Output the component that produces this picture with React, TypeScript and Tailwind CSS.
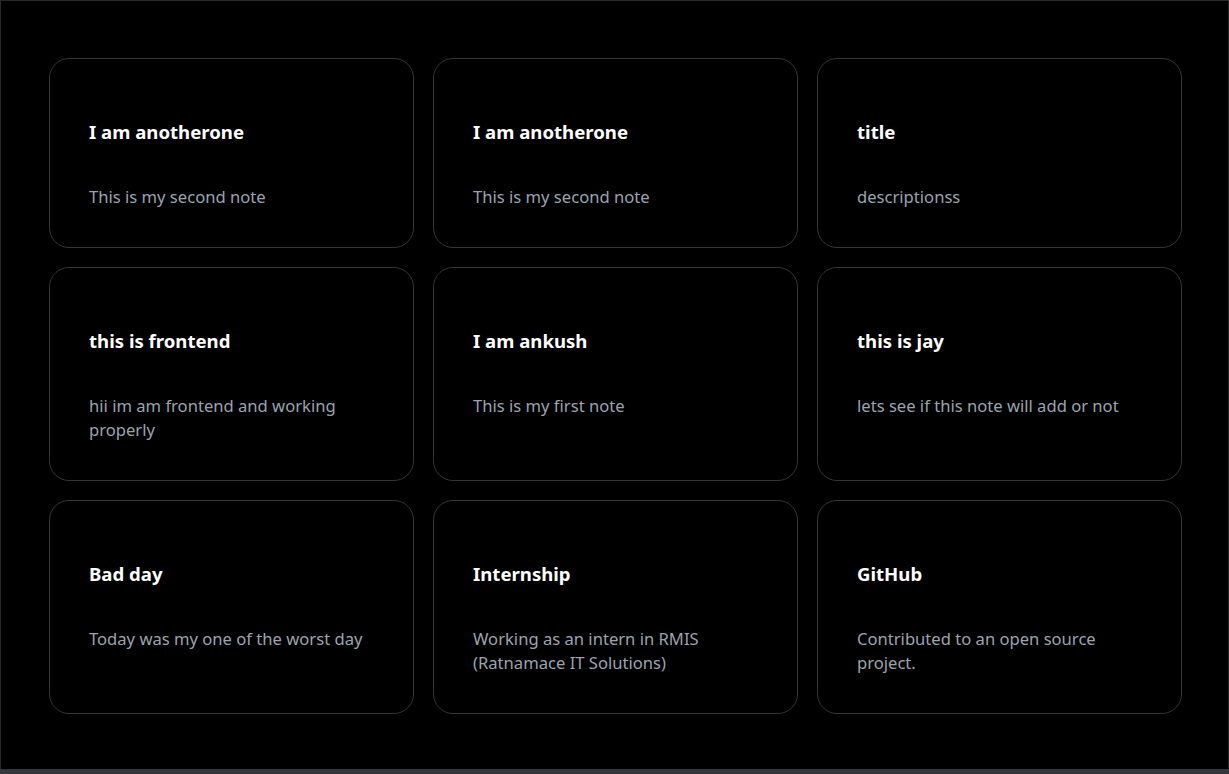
import React from 'react';

interface Note {
  id: number;
  title: string;
  description: string;
}

const notes: Note[] = [
  { id: 1, title: 'I am anotherone', description: 'This is my second note' },
  { id: 2, title: 'I am anotherone', description: 'This is my second note' },
  { id: 3, title: 'title', description: 'descriptionss' },
  { id: 4, title: 'this is frontend', description: 'hii im am frontend and working properly' },
  { id: 5, title: 'I am ankush', description: 'This is my first note' },
  { id: 6, title: 'this is jay', description: 'lets see if this note will add or not' },
  { id: 7, title: 'Bad day', description: 'Today was my one of the worst day' },
  { id: 8, title: 'Internship', description: 'Working as an intern in RMIS (Ratnamace IT Solutions)' },
  { id: 9, title: 'GitHub', description: 'Contributed to an open source project.' },
];

function NoteCard({ note }: { note: Note }) {
  return (
    <div className="rounded-[20px] border border-[#353535] bg-black px-[39px] pt-[59px] pb-[38px]">
      <h2 className="text-[18.6px] font-bold leading-7 text-white">{note.title}</h2>
      <p className="mt-[39px] text-[16.6px] leading-6 text-[#9ca3af]">{note.description}</p>
    </div>
  );
}

export default function App() {
  return (
    <div
      className="flex h-[774px] w-full flex-col bg-black"
      style={{ fontFamily: '"Noto Sans", "Open Sans", sans-serif' }}
    >
      <div className="flex-1 border-x border-t border-[#2a2a2a] pl-[48px] pr-[46px] pt-[57px]">
        <div className="grid grid-cols-3 gap-[19px]">
          {notes.map((note) => (
            <NoteCard key={note.id} note={note} />
          ))}
        </div>
      </div>
      <div className="h-[5px] bg-[#34373b]" />
    </div>
  );
}
